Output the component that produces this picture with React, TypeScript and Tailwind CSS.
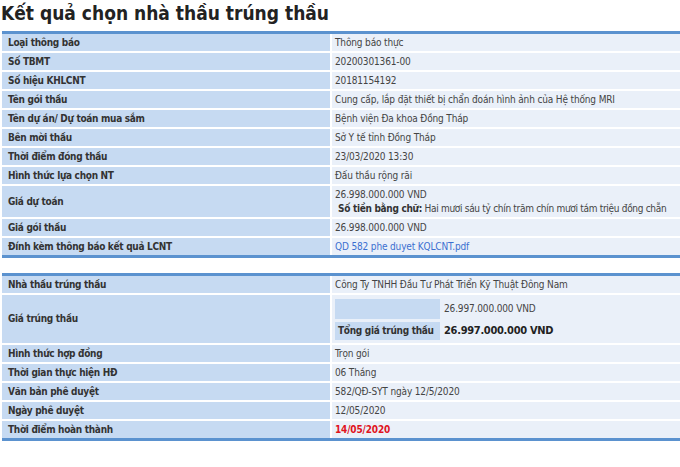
import React from "react";

const font = { fontFamily: '"DejaVu Sans Condensed", "DejaVu Sans", Verdana, sans-serif' };

function Row({ label, children, tall }: { label: string; children: React.ReactNode; tall?: string }) {
  return (
    <>
      <div className={`bg-[#c6daf2] font-bold text-[#333] tracking-[-0.3px] pl-[6px] flex items-center ${tall ?? "h-[17px]"}`}>{label}</div>
      <div className={`bg-[#eaf0f9] text-[#444] tracking-[-0.15px] pl-[3px] flex items-center whitespace-nowrap ${tall ?? "h-[17px]"}`}>{children}</div>
    </>
  );
}

export default function App() {
  return (
    <div className="w-[680px] h-[467px] overflow-hidden bg-white text-[10px] leading-[14px]" style={font}>
      <h1 className="text-[19px] leading-[24px] font-bold text-[#222] pl-[1px] pt-[1px]">Kết quả chọn nhà thầu trúng thầu</h1>

      <div className="ml-[2px] mt-[6px] w-[678px] border-t-[3px] border-[#5b92cf]">
        <div className="grid grid-cols-[328px_1fr] gap-[2px] bg-white">
          <Row label="Loại thông báo">Thông báo thực</Row>
          <Row label="Số TBMT">20200301361-00</Row>
          <Row label="Số hiệu KHLCNT">20181154192</Row>
          <Row label="Tên gói thầu">Cung cấp, lắp đặt thiết bị chẩn đoán hình ảnh của Hệ thống MRI</Row>
          <Row label="Tên dự án/ Dự toán mua sắm">Bệnh viện Đa khoa Đồng Tháp</Row>
          <Row label="Bên mời thầu">Sở Y tế tỉnh Đồng Tháp</Row>
          <Row label="Thời điểm đóng thầu">23/03/2020 13:30</Row>
          <Row label="Hình thức lựa chọn NT">Đấu thầu rộng rãi</Row>
          <Row label="Giá dự toán" tall="h-[31px]">
            <div className="flex flex-col">
              <span>26.998.000.000 VND</span>
              <span className="pl-[3px] tracking-[-0.3px]">
                <b className="text-[#333]">Số tiền bằng chữ:</b> Hai mươi sáu tỷ chín trăm chín mươi tám triệu đồng chẵn
              </span>
            </div>
          </Row>
          <Row label="Giá gói thầu">26.998.000.000 VND</Row>
          <Row label="Đính kèm thông báo kết quả LCNT">
            <span className="text-[#3a6fd0]">QD 582 phe duyet KQLCNT.pdf</span>
          </Row>
        </div>
        <div className="border-b-[3px] border-[#5b92cf]" />
      </div>

      <div className="ml-[2px] mt-[15px] w-[678px] border-t-[3px] border-[#5b92cf]">
        <div className="grid grid-cols-[328px_1fr] gap-[2px] bg-white">
          <Row label="Nhà thầu trúng thầu">Công Ty TNHH Đầu Tư Phát Triển Kỹ Thuật Đông Nam</Row>
          <Row label="Giá trúng thầu" tall="h-[48px]">
            <div className="grid grid-cols-[105px_auto] gap-[3px] py-[2px]">
              <div className="bg-[#c6daf2] h-[20px]" />
              <div className="flex items-center pl-[1px]">26.997.000.000 VND</div>
              <div className="bg-[#c6daf2] h-[18px] flex items-center pl-[3px] font-bold text-[#333] tracking-[-0.3px]">Tổng giá trúng thầu</div>
              <div className="flex items-center pl-[1px] font-bold text-[11px] text-[#222] tracking-[-0.3px]">26.997.000.000 VND</div>
            </div>
          </Row>
          <Row label="Hình thức hợp đồng">Trọn gói</Row>
          <Row label="Thời gian thực hiện HĐ">06 Tháng</Row>
          <Row label="Văn bản phê duyệt">582/QĐ-SYT ngày 12/5/2020</Row>
          <Row label="Ngày phê duyệt">12/05/2020</Row>
          <Row label="Thời điểm hoàn thành">
            <span className="font-bold text-[#e0141e]">14/05/2020</span>
          </Row>
        </div>
        <div className="border-b-[3px] border-[#5b92cf]" />
      </div>
    </div>
  );
}
